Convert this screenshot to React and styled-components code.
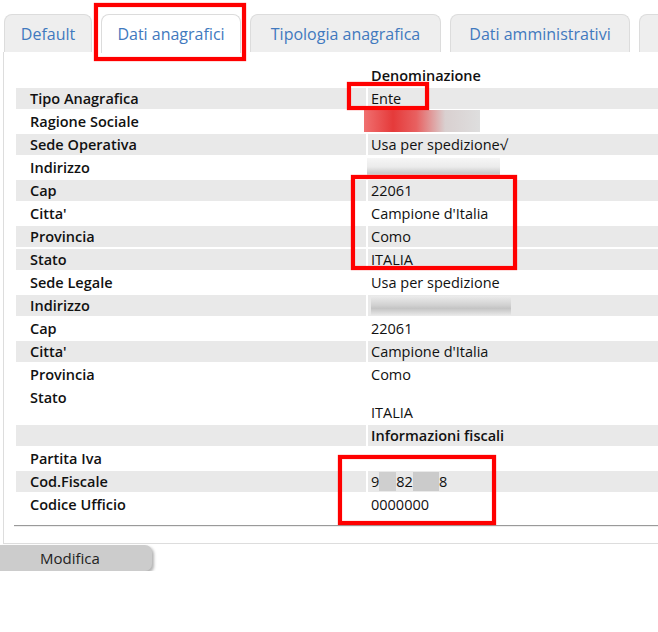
import React from "react";
import styled, { createGlobalStyle } from "styled-components";

const GlobalStyle = createGlobalStyle`
    body {
        margin: 0;
        overflow: hidden;
        background: #fff;
        font-family: "Open Sans", "Noto Sans", "DejaVu Sans", sans-serif;
    }
`;

const Page = styled.div`
    position: relative;
    width: 720px;
`;

const TabBar = styled.div`
    display: flex;
    align-items: flex-end;
    gap: 9px;
    padding: 14px 0 0 4px;
    height: 38px;
`;

const Tab = styled.div`
    box-sizing: border-box;
    flex: none;
    width: ${props => props.$w}px;
    height: ${props => props.$active ? 39 : 38}px;
    margin-bottom: ${props => props.$active ? '-1px' : '0'};
    display: flex;
    align-items: center;
    justify-content: center;
    background: ${props => props.$active ? '#fff' : '#eeeeee'};
    border: 1px solid #dcdcdc;
    border-bottom: none;
    border-radius: 8px 8px 0 0;
    color: #4179be;
    font-size: 16px;
    position: relative;
    z-index: 1;
`;

const Panel = styled.div`
    margin-left: 3px;
    border-left: 1px solid #dddddd;
    border-bottom: 1px solid #dddddd;
    padding: 11px 0 16px 10px;
`;

const Table = styled.table`
    border-spacing: 2px;
    width: 700px;
    font-size: 14.5px;
    color: #111;
`;

const Label = styled.td`
    width: 322px;
    padding: 1px 14px;
    line-height: 19px;
    vertical-align: top;
    font-weight: 600;
    background: ${props => props.$shade ? '#e9e9e9' : 'transparent'};
`;

const Value = styled.td`
    padding: ${props => props.$tall ? '16px' : '1px'} 3px 1px 3px;
    line-height: 19px;
    vertical-align: top;
    white-space: nowrap;
    font-weight: ${props => props.$head ? 600 : 400};
    background: ${props => props.$shade ? '#e9e9e9' : 'transparent'};
`;

const Blur = styled.span`
    display: inline-block;
    vertical-align: top;
    width: ${props => props.$w}px;
    height: ${props => props.$h || 19}px;
    margin-left: ${props => props.$ml || 0}px;
    margin-top: ${props => props.$mt || 0}px;
    margin-bottom: ${props => props.$mb || 0}px;
    background: ${props => props.$bg};
`;

const Rule = styled.hr`
    margin: 8px 0 0 0;
    border: none;
    border-top: 1px solid #9a9a9a;
    border-bottom: 1px solid #eeeeee;
`;

const Button = styled.button`
    display: block;
    width: 152px;
    height: 26px;
    margin: 1px 0 0 0;
    padding: 0 0 0 40px;
    text-align: left;
    border: none;
    border-radius: 0 7px 7px 0;
    background: #cccccc;
    box-shadow: 2px 2px 3px rgba(0, 0, 0, 0.3);
    color: #222;
    font-family: inherit;
    font-size: 15px;
`;

const Marker = styled.div`
    position: absolute;
    box-sizing: border-box;
    top: ${props => props.$top}px;
    left: ${props => props.$left}px;
    width: ${props => props.$w}px;
    height: ${props => props.$h}px;
    border: 4px solid #ff0000;
    box-shadow: 0 0 1px #ff3030, inset 0 0 1px #ff3030;
    z-index: 5;
    pointer-events: none;
`;

const redBlur = "linear-gradient(90deg, #f07070 0%, #e53a3a 25%, #e86060 45%, #d9d0d0 70%, #dedede 100%)";
const lightBlur = "linear-gradient(180deg, #f6f6f6 0%, #ebebeb 50%, #c9c9c9 85%, #e6e6e6 100%)";
const grayBlur = "linear-gradient(180deg, #ececec 0%, #d0d0d0 50%, #c4c4c4 65%, #e6e6e6 100%)";

const tabs = [
    { label: "Default", w: 88 },
    { label: "Dati anagrafici", w: 140, active: true },
    { label: "Tipologia anagrafica", w: 191 },
    { label: "Dati amministrativi", w: 180 },
    { label: "Contatti", w: 100 },
];

const rows = [
    { label: "", value: "Denominazione", head: true },
    { label: "Tipo Anagrafica", value: "Ente", shade: true },
    { label: "Ragione Sociale", value: <Blur $w={116} $h={22} $ml={-7} $mt={-2} $mb={-1} $bg={redBlur} /> },
    { label: "Sede Operativa", value: "Usa per spedizione\u221a", shade: true },
    { label: "Indirizzo", value: <Blur $w={133} $h={18} $ml={-4} $bg={lightBlur} /> },
    { label: "Cap", value: "22061", shade: true },
    { label: "Citta'", value: "Campione d'Italia" },
    { label: "Provincia", value: "Como", shade: true },
    { label: "Stato", value: "ITALIA", shade: true },
    { label: "Sede Legale", value: "Usa per spedizione" },
    { label: "Indirizzo", value: <Blur $w={140} $h={19} $bg={grayBlur} />, shade: true },
    { label: "Cap", value: "22061" },
    { label: "Citta'", value: "Campione d'Italia", shade: true },
    { label: "Provincia", value: "Como" },
    { label: "Stato", value: "ITALIA", tall: true },
    { label: "", value: "Informazioni fiscali", head: true, shade: true },
    { label: "Partita Iva", value: "" },
    {
        label: "Cod.Fiscale",
        value: (
            <>
                9<Blur $w={17} $bg="#cfcfcf" />82<Blur $w={26} $bg="#cbcbcb" />8
            </>
        ),
        shade: true,
    },
    { label: "Codice Ufficio", value: "0000000" },
];

const App = () => {
    return (
        <Page>
            <GlobalStyle />
            <TabBar>
                {tabs.map(t => (
                    <Tab key={t.label} $w={t.w} $active={t.active}>{t.label}</Tab>
                ))}
            </TabBar>
            <Panel>
                <Table>
                    <tbody>
                        {rows.map((r, i) => (
                            <tr key={i}>
                                <Label $shade={r.shade}>{r.label}</Label>
                                <Value $shade={r.shade} $head={r.head} $tall={r.tall}>{r.value}</Value>
                            </tr>
                        ))}
                    </tbody>
                </Table>
                <Rule />
            </Panel>
            <Button type="button">Modifica</Button>

            <Marker $top={3} $left={94} $w={152} $h={58} />
            <Marker $top={82} $left={347} $w={82} $h={28} />
            <Marker $top={175} $left={351} $w={166} $h={95} />
            <Marker $top={455} $left={338} $w={158} $h={70} />
        </Page>
    );
};

export default App;
